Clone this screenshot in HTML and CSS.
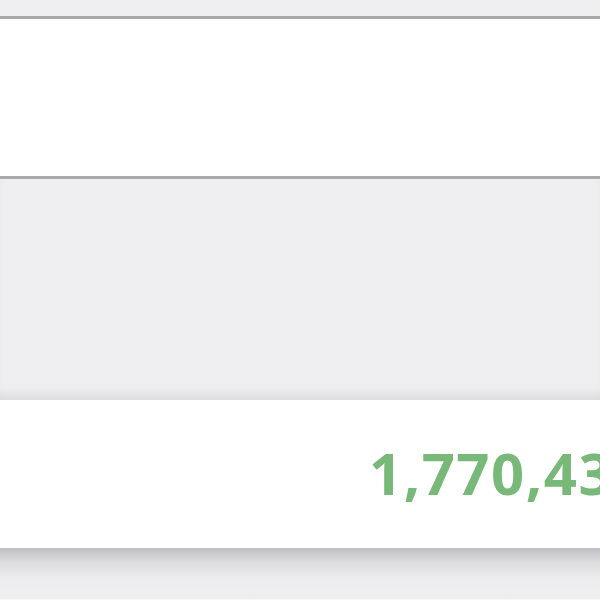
FILE: index.html
```html
<!DOCTYPE html>
<html lang="en">
<head>
  <meta charset="UTF-8" />
  <meta name="viewport" content="width=device-width, initial-scale=1.0"/>
  <title>Total</title>
  <link rel="stylesheet" href="styles.css">
</head>
<body>
  <div class="top-band"></div>
  <div class="panel"></div>
  <div class="gray-area"></div>
  <div class="card">
    <span class="total">1,770,439</span>
  </div>
  <div class="below"></div>
</body>
</html>
```

FILE: styles.css
```css
body {
  font-family: "Open Sans", Arial, sans-serif;
  background-color: #efeff1;
  margin: 0;
  padding: 0;
  overflow: hidden;
}

.top-band {
  height: 16px;
  background-color: #efeff1;
  border-bottom: 3px solid #a9a9a9;
}

.panel {
  height: 157px;
  background-color: white;
  border-bottom: 3px solid #a9a9a9;
}

.gray-area {
  height: 221px;
  background-color: #efeff1;
  box-shadow: inset 0 -12px 14px -8px rgba(0, 0, 0, 0.1);
}

.card {
  height: 148px;
  box-sizing: border-box;
  padding: 44px 0 0 369px;
  background-color: white;
  white-space: nowrap;
  overflow: hidden;
}

.total {
  font-size: 58px;
  line-height: 58px;
  font-weight: 700;
  letter-spacing: 1.5px;
  color: #78b878;
}

/* shadow thrown by the card onto the page below */
.below {
  height: 52px;
  background: linear-gradient(#bebec2, #dcdcdf 14px, #ececee 30px, #efeff1);
  border-bottom: 1px solid #f7f7f8;
  box-sizing: border-box;
  margin-bottom: 6px;
}
```
